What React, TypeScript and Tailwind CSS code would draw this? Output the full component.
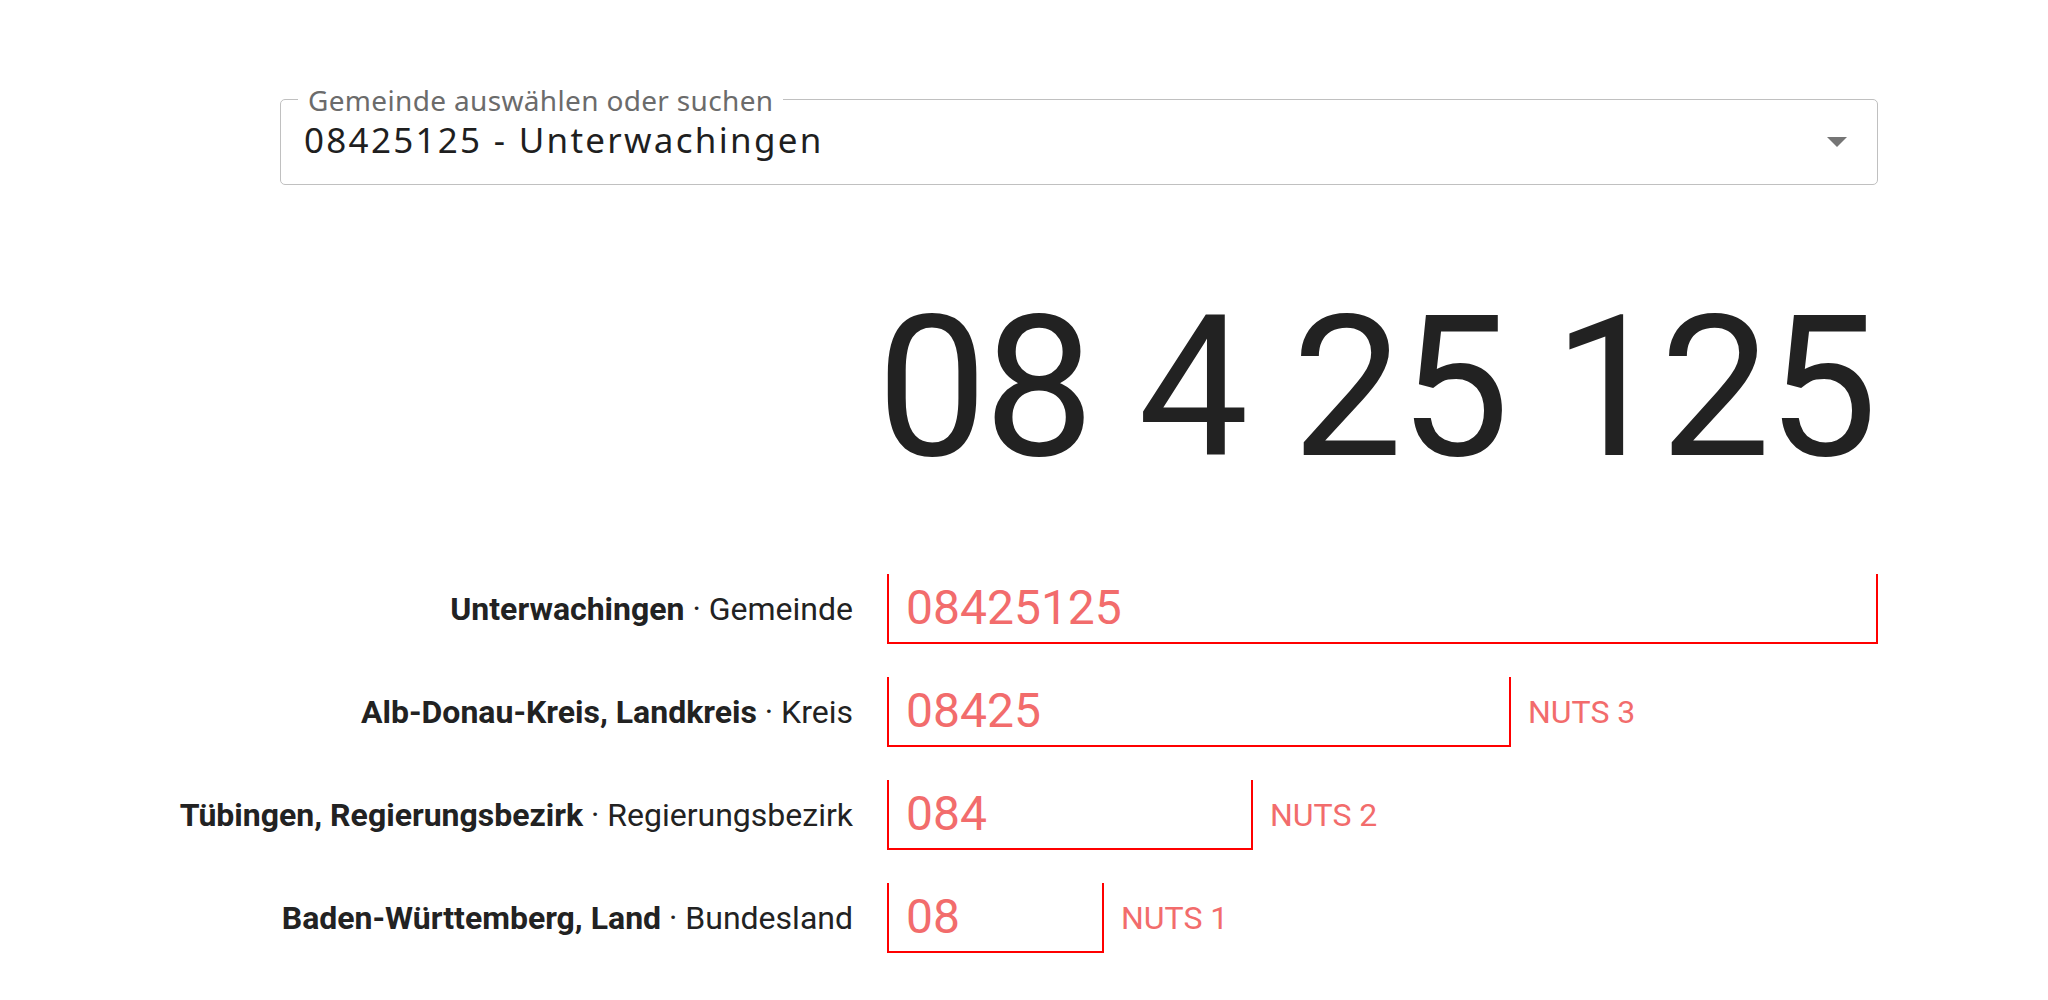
import React from 'react';

interface Level {
  name: string;
  type: string;
  code: string;
  width: string;
  nuts?: string;
}

const levels: Level[] = [
  { name: 'Unterwachingen', type: 'Gemeinde', code: '08425125', width: 'w-[991px]' },
  { name: 'Alb-Donau-Kreis, Landkreis', type: 'Kreis', code: '08425', width: 'w-[624px]', nuts: 'NUTS 3' },
  { name: 'Tübingen, Regierungsbezirk', type: 'Regierungsbezirk', code: '084', width: 'w-[366px]', nuts: 'NUTS 2' },
  { name: 'Baden-Württemberg, Land', type: 'Bundesland', code: '08', width: 'w-[217px]', nuts: 'NUTS 1' },
];

const roboto = { fontFamily: 'Roboto, "Liberation Sans", sans-serif' };

export default function App() {
  return (
    <div className="w-[2048px] min-h-[1000px] bg-white text-[#222222]" style={roboto}>
      <div className="w-[1878px] pt-[99px]">
        {/* Gemeinde select */}
        <div className="ml-[280px] relative h-[86px] rounded-[5px] border border-[#c0c0c0] flex items-center pl-[23px] pr-[30px] pb-[6px] font-['Noto_Sans',sans-serif]">
          <span className="absolute -top-[14px] left-[17px] bg-white px-[10px] text-[28px] leading-none tracking-[0.012em] text-[#6b6b6b]">
            Gemeinde auswählen oder suchen
          </span>
          <span className="flex-1 text-[35px] leading-none tracking-[0.065em] text-[#1f1f1f]">
            08425125 - Unterwachingen
          </span>
          <svg width="20" height="10" viewBox="0 0 20 10" className="mt-[6px]">
            <path d="M0 0 L20 0 L10 10 Z" fill="#757575" />
          </svg>
        </div>

        {/* Big AGS */}
        <div className="mt-[104px] flex justify-end pr-[4px]">
          <div className="text-[197px] leading-[197px] tracking-[-0.019em] [word-spacing:2px] text-[#222222]">08 4 25 125</div>
        </div>

        {/* Levels */}
        <div className="mt-[88px] flex flex-col gap-[33px]">
          {levels.map((l) => (
            <div key={l.code} className="flex items-center gap-[34px]">
              <div className="w-[853px] shrink-0 text-right text-[32px] leading-none">
                <span className="font-bold">{l.name}</span>
                <span> · {l.type}</span>
              </div>
              <div className="flex items-center gap-[17px]">
                <div className={`${l.width} h-[70px] border-x-2 border-b-2 border-[#ff0000] flex items-center pl-[17px] text-[48px] leading-none text-[#f26c6c]`}>
                  {l.code}
                </div>
                {l.nuts && <span className="text-[32px] leading-none text-[#f26c6c]">{l.nuts}</span>}
              </div>
            </div>
          ))}
        </div>
      </div>
    </div>
  );
}
